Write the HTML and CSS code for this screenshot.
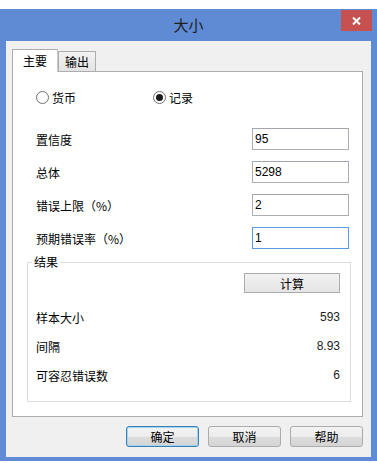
FILE: index.html
```html
<!DOCTYPE html>
<html lang="zh-CN">
<head>
    <meta charset="UTF-8">
    <title>大小</title>
    <link rel="stylesheet" href="styles.css">
</head>
<body>
    <div class="window">
        <div class="titlebar">
            <span></span>
            <span class="title">大小</span>
            <span class="close">
                <svg width="9" height="8" viewBox="0 0 9 8"><path d="M1 0.5 L8 7.5 M8 0.5 L1 7.5" stroke="#fff" stroke-width="2"/></svg>
            </span>
        </div>

        <div class="client">
            <div class="tabs">
                <div class="tab active">主要</div>
                <div class="tab">输出</div>
            </div>

            <div class="panel">
                <div class="radios">
                    <label class="radio"><span class="dot"></span>货币</label>
                    <label class="radio checked"><span class="dot"></span>记录</label>
                </div>

                <div class="field">
                    <span class="label">置信度</span>
                    <input type="text" value="95">
                </div>
                <div class="field">
                    <span class="label">总体</span>
                    <input type="text" value="5298">
                </div>
                <div class="field">
                    <span class="label">错误上限（%）</span>
                    <input type="text" value="2">
                </div>
                <div class="field">
                    <span class="label">预期错误率（%）</span>
                    <input type="text" class="focus" value="1">
                </div>

                <fieldset class="group">
                    <legend>结果</legend>
                    <div class="calc-row">
                        <button class="btn calc">计算</button>
                    </div>
                    <div class="result"><span>样本大小</span><span class="num">593</span></div>
                    <div class="result"><span>间隔</span><span class="num">8.93</span></div>
                    <div class="result"><span>可容忍错误数</span><span class="num">6</span></div>
                </fieldset>
            </div>

            <div class="buttons">
                <button class="btn default">确定</button>
                <button class="btn">取消</button>
                <button class="btn">帮助</button>
            </div>
        </div>
    </div>
</body>
</html>
```

FILE: styles.css
```css
body {
    margin: 0;
    background-color: #fff;
    font-family: "Noto Sans CJK SC", "Liberation Sans", sans-serif;
    font-size: 12px;
    color: #000;
}

.window {
    margin-top: 9px;
    height: 452px;
    background-color: #5e8bd4;
    display: flex;
    flex-direction: column;
}

.titlebar {
    height: 32px;
    display: grid;
    grid-template-columns: 1fr auto 1fr;
    padding: 0 5px;
    box-sizing: border-box;
}

.title {
    font-size: 15px;
    line-height: 32px;
    color: #1e1e1e;
}

.close {
    justify-self: end;
    width: 31px;
    height: 21px;
    margin-top: 1px;
    background-color: #c75050;
    display: flex;
    align-items: center;
    justify-content: center;
}

.client {
    margin: 0 6px;
    height: 416px;
    background-color: #f0f0f0;
    padding: 8px 8px 0 6px;
    box-sizing: border-box;
}

.tabs {
    display: flex;
    align-items: flex-end;
    height: 22px;
}

.tab {
    height: 20px;
    line-height: 19px;
    box-sizing: border-box;
    border: 1px solid #adadad;
    border-bottom: none;
    background: linear-gradient(#f2f2f2, #e3e3e3);
    text-align: center;
    width: 38px;
}

.tab.active {
    position: relative;
    z-index: 1;
    width: 46px;
    height: 23px;
    line-height: 22px;
    margin-bottom: -1px;
    background: #fff;
    border-right: 1px solid #c8c8c8;
}

.panel {
    height: 346px;
    box-sizing: border-box;
    border: 1px solid #adadad;
    background-color: #fff;
    padding: 0 11px 0 14px;
}

.radios {
    display: flex;
    margin-top: 15px;
    padding-left: 9px;
    height: 20px;
    align-items: center;
}

.radio {
    display: flex;
    align-items: center;
    width: 117px;
    gap: 3px;
}

.dot {
    width: 11px;
    height: 11px;
    border: 1px solid #707070;
    border-radius: 50%;
    background-color: #fff;
    display: flex;
    align-items: center;
    justify-content: center;
}

.radio.checked .dot::after {
    content: "";
    width: 7px;
    height: 7px;
    border-radius: 50%;
    background-color: #1a1a1a;
}

.field {
    display: flex;
    align-items: center;
    justify-content: space-between;
    height: 22px;
    margin-top: 11px;
    padding: 0 2px 0 9px;
}

.radios + .field {
    margin-top: 21px;
}

.field input {
    width: 97px;
    height: 22px;
    box-sizing: border-box;
    border: 1px solid #abadb3;
    border-top-color: #a3a6ad;
    padding: 0 2px;
    font-family: "Liberation Sans", sans-serif;
    font-size: 12px;
    color: #000;
    outline: none;
}

.field input.focus {
    border-color: #569de5;
}

.group {
    margin: 6px 0 0 0;
    border: 1px solid #dcdcdc;
    padding: 4px 10px 16px 8px;
    min-width: 0;
}

.group legend {
    margin-left: -4px;
    padding: 0 2px;
    line-height: 14px;
}

.calc-row {
    display: flex;
    justify-content: flex-end;
}

.btn {
    font-family: "Noto Sans CJK SC", "Liberation Sans", sans-serif;
    font-size: 12px;
    color: #000;
    height: 21px;
    width: 73px;
    padding: 0;
    border: 1px solid #acacac;
    border-radius: 3px;
    background: linear-gradient(#f3f3f3, #ececec 50%, #dddddd 51%, #d4d4d4);
}

.btn.calc {
    width: 96px;
    height: 20px;
    border-radius: 0;
    background: linear-gradient(#f2f2f2, #e4e4e4);
}

.btn.default {
    border-color: #3c7fb1;
    box-shadow: inset 0 0 0 1px #9fd5f8;
}

.result {
    display: flex;
    justify-content: space-between;
    align-items: center;
    height: 20px;
    margin-top: 9px;
}

.calc-row + .result {
    margin-top: 14px;
}

.num {
    font-family: "Liberation Sans", sans-serif;
    color: #222;
}

.buttons {
    display: flex;
    justify-content: flex-end;
    gap: 9px;
    margin-top: 9px;
}
```
